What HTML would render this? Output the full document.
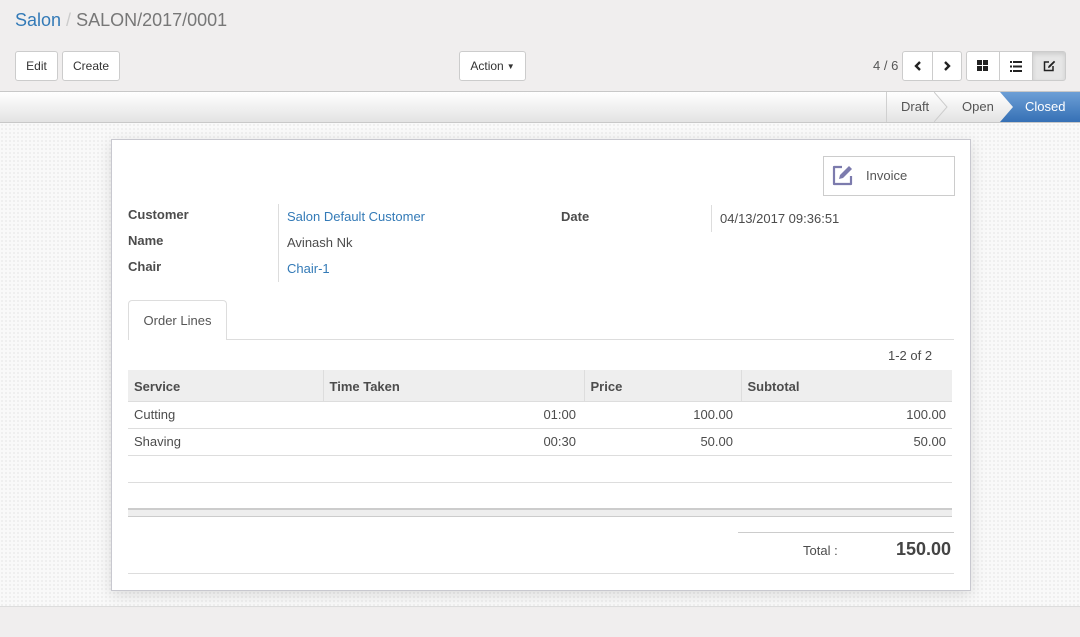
<!DOCTYPE html>
<html><head><style>
*{box-sizing:border-box}
body{margin:0;width:1080px;height:637px;overflow:hidden;font-family:"Liberation Sans",sans-serif;font-size:13px;color:#4c4c4c;background:#f0eeee;position:relative}
.a{position:absolute}
.btn{position:absolute;background:#fff;border:1px solid #ccc;border-radius:3px;height:30px;font-size:12px;color:#333;display:flex;align-items:center;justify-content:center}
.lnk{color:#337ab7}
th,td{padding:0 6px;height:27px}
</style></head><body>
<div class="a" style="left:15px;top:10px;font-size:18px;color:#777"><span style="color:#337ab7">Salon</span><span style="color:#ccc"> / </span> SALON/2017/0001</div>
<div class="btn" style="left:15px;top:51px;width:43px">Edit</div>
<div class="btn" style="left:62px;top:51px;width:58px">Create</div>
<div class="btn" style="left:459px;top:51px;width:67px">Action <span style="font-size:8px;margin-left:3px">▼</span></div>
<div class="a" style="left:873px;top:58px;font-size:13px;color:#555">4 / 6</div>
<div class="btn" style="left:902px;top:51px;width:31px;border-radius:3px 0 0 3px"><svg width="10" height="12"><path d="M7 2 L3 6 L7 10" stroke="#222" stroke-width="2.4" fill="none"/></svg></div>
<div class="btn" style="left:932px;top:51px;width:30px;border-radius:0 3px 3px 0"><svg width="10" height="12"><path d="M3 2 L7 6 L3 10" stroke="#222" stroke-width="2.4" fill="none"/></svg></div>
<div class="btn" style="left:966px;top:51px;width:34px;border-radius:3px 0 0 3px"><svg width="12" height="12"><rect x="0" y="0" width="5" height="5" fill="#222"/><rect x="6" y="0" width="5" height="5" fill="#222"/><rect x="0" y="6" width="5" height="5" fill="#222"/><rect x="6" y="6" width="5" height="5" fill="#222"/></svg></div>
<div class="btn" style="left:999px;top:51px;width:34px;border-radius:0"><svg width="12" height="11"><g fill="#222"><rect x="0" y="0" width="2" height="2"/><rect x="3" y="0" width="9" height="2"/><rect x="0" y="4.5" width="2" height="2"/><rect x="3" y="4.5" width="9" height="2"/><rect x="0" y="9" width="2" height="2"/><rect x="3" y="9" width="9" height="2"/></g></svg></div>
<div class="btn" style="left:1032px;top:51px;width:34px;border-radius:0 3px 3px 0;background:#e6e6e6;box-shadow:inset 0 2px 4px rgba(0,0,0,.12)"><svg width="13" height="12"><path d="M6 2H1.5V10.5H10V6" stroke="#222" stroke-width="1.5" fill="none"/><path d="M5 8L5.5 6L11 0.8L12.2 2L6.8 7.5Z" fill="#222"/></svg></div>
<div class="a" style="left:0;top:91px;width:1080px;height:32px;background:linear-gradient(#fff,#e3e3e3);border-top:1px solid #c8c8c8;border-bottom:1px solid #c8c8c8"></div>
<div class="a" style="left:886px;top:92px;width:1px;height:30px;background:#d0d0d0"></div>
<div class="a" style="left:901px;top:99px;color:#555">Draft</div>
<svg class="a" style="left:934px;top:92px" width="15" height="30"><path d="M0 0 L13 15 L0 30" stroke="#ccc" fill="none"/></svg>
<div class="a" style="left:962px;top:99px;color:#555">Open</div>
<svg class="a" style="left:1000px;top:92px" width="80" height="30"><defs><linearGradient id="g" x1="0" y1="0" x2="0" y2="1"><stop offset="0" stop-color="#6d9fd6"/><stop offset="1" stop-color="#3570b5"/></linearGradient></defs><path d="M0 0H80V30H0L13 15Z" fill="url(#g)"/></svg>
<div class="a" style="left:1025px;top:99px;color:#fff">Closed</div>
<div class="a" style="left:0;top:123px;width:1080px;height:484px;background-color:#f9f9f9;background-image:radial-gradient(#ececec 0.8px,transparent 0.9px);background-size:4px 4px;border-bottom:1px solid #ddd"></div>
<div class="a" style="left:111px;top:139px;width:860px;height:452px;background:#fff;border:1px solid #c8c8cf;box-shadow:0 4px 14px rgba(0,0,0,.12)"></div>
<div class="a" style="left:823px;top:156px;width:132px;height:40px;border:1px solid #ccc;background:#fff"></div>
<svg class="a" style="left:831px;top:164px" width="25" height="24"><path d="M11 3H3V20H20V12" stroke="#7c7bad" stroke-width="2.2" fill="none" stroke-linejoin="round"/><path d="M8 15L9 11L18 2L21 5L12 14Z" fill="#7c7bad"/></svg>
<div class="a" style="left:866px;top:168px;color:#555">Invoice</div>
<div class="a" style="left:128px;top:207px;font-weight:bold;color:#4c4c4c">Customer</div>
<div class="a" style="left:128px;top:233px;font-weight:bold">Name</div>
<div class="a" style="left:128px;top:259px;font-weight:bold">Chair</div>
<div class="a" style="left:278px;top:204px;width:1px;height:78px;background:#ddd"></div>
<div class="a lnk" style="left:287px;top:209px">Salon Default Customer</div>
<div class="a" style="left:287px;top:235px">Avinash Nk</div>
<div class="a lnk" style="left:287px;top:261px">Chair-1</div>
<div class="a" style="left:561px;top:209px;font-weight:bold">Date</div>
<div class="a" style="left:711px;top:205px;width:1px;height:27px;background:#ddd"></div>
<div class="a" style="left:720px;top:211px">04/13/2017 09:36:51</div>
<div class="a" style="left:128px;top:339px;width:826px;height:1px;background:#ddd"></div>
<div class="a" style="left:128px;top:300px;width:99px;height:40px;background:#fff;border:1px solid #ddd;border-bottom:none;border-radius:4px 4px 0 0;padding-top:12px;text-align:center;color:#555">Order Lines</div>
<div class="a" style="left:888px;top:348px">1-2 of 2</div>
<table class="a" style="left:128px;top:370px;width:824px;border-collapse:collapse;font-size:13px">
<tr style="background:#eee;height:31px;font-weight:bold;border-bottom:1px solid #ddd"><td style="width:195px;height:31px;padding-top:3px">Service</td><td style="width:261px;border-left:1px solid #ddd;padding-top:3px">Time Taken</td><td style="width:157px;border-left:1px solid #ddd;padding-top:3px">Price</td><td style="border-left:1px solid #ddd;padding-top:3px">Subtotal</td></tr>
<tr style="border-bottom:1px solid #ddd"><td>Cutting</td><td style="text-align:right;padding-right:8px">01:00</td><td style="text-align:right;padding-right:8px">100.00</td><td style="text-align:right">100.00</td></tr>
<tr style="border-bottom:1px solid #ddd"><td>Shaving</td><td style="text-align:right;padding-right:8px">00:30</td><td style="text-align:right;padding-right:8px">50.00</td><td style="text-align:right">50.00</td></tr>
<tr style="border-bottom:1px solid #ddd"><td></td><td></td><td></td><td></td></tr>
</table>
<div class="a" style="left:128px;top:508px;width:824px;height:9px;border-top:2px solid #ccc;border-bottom:1px solid #ccc;background:#eee"></div>
<div class="a" style="left:738px;top:532px;width:216px;height:1px;background:#ccc"></div>
<div class="a" style="left:803px;top:543px;">Total :</div>
<div class="a" style="left:896px;top:539px;font-size:18px;font-weight:bold;color:#444">150.00</div>
<div class="a" style="left:128px;top:573px;width:826px;height:1px;background:#ddd"></div>
</body></html>
